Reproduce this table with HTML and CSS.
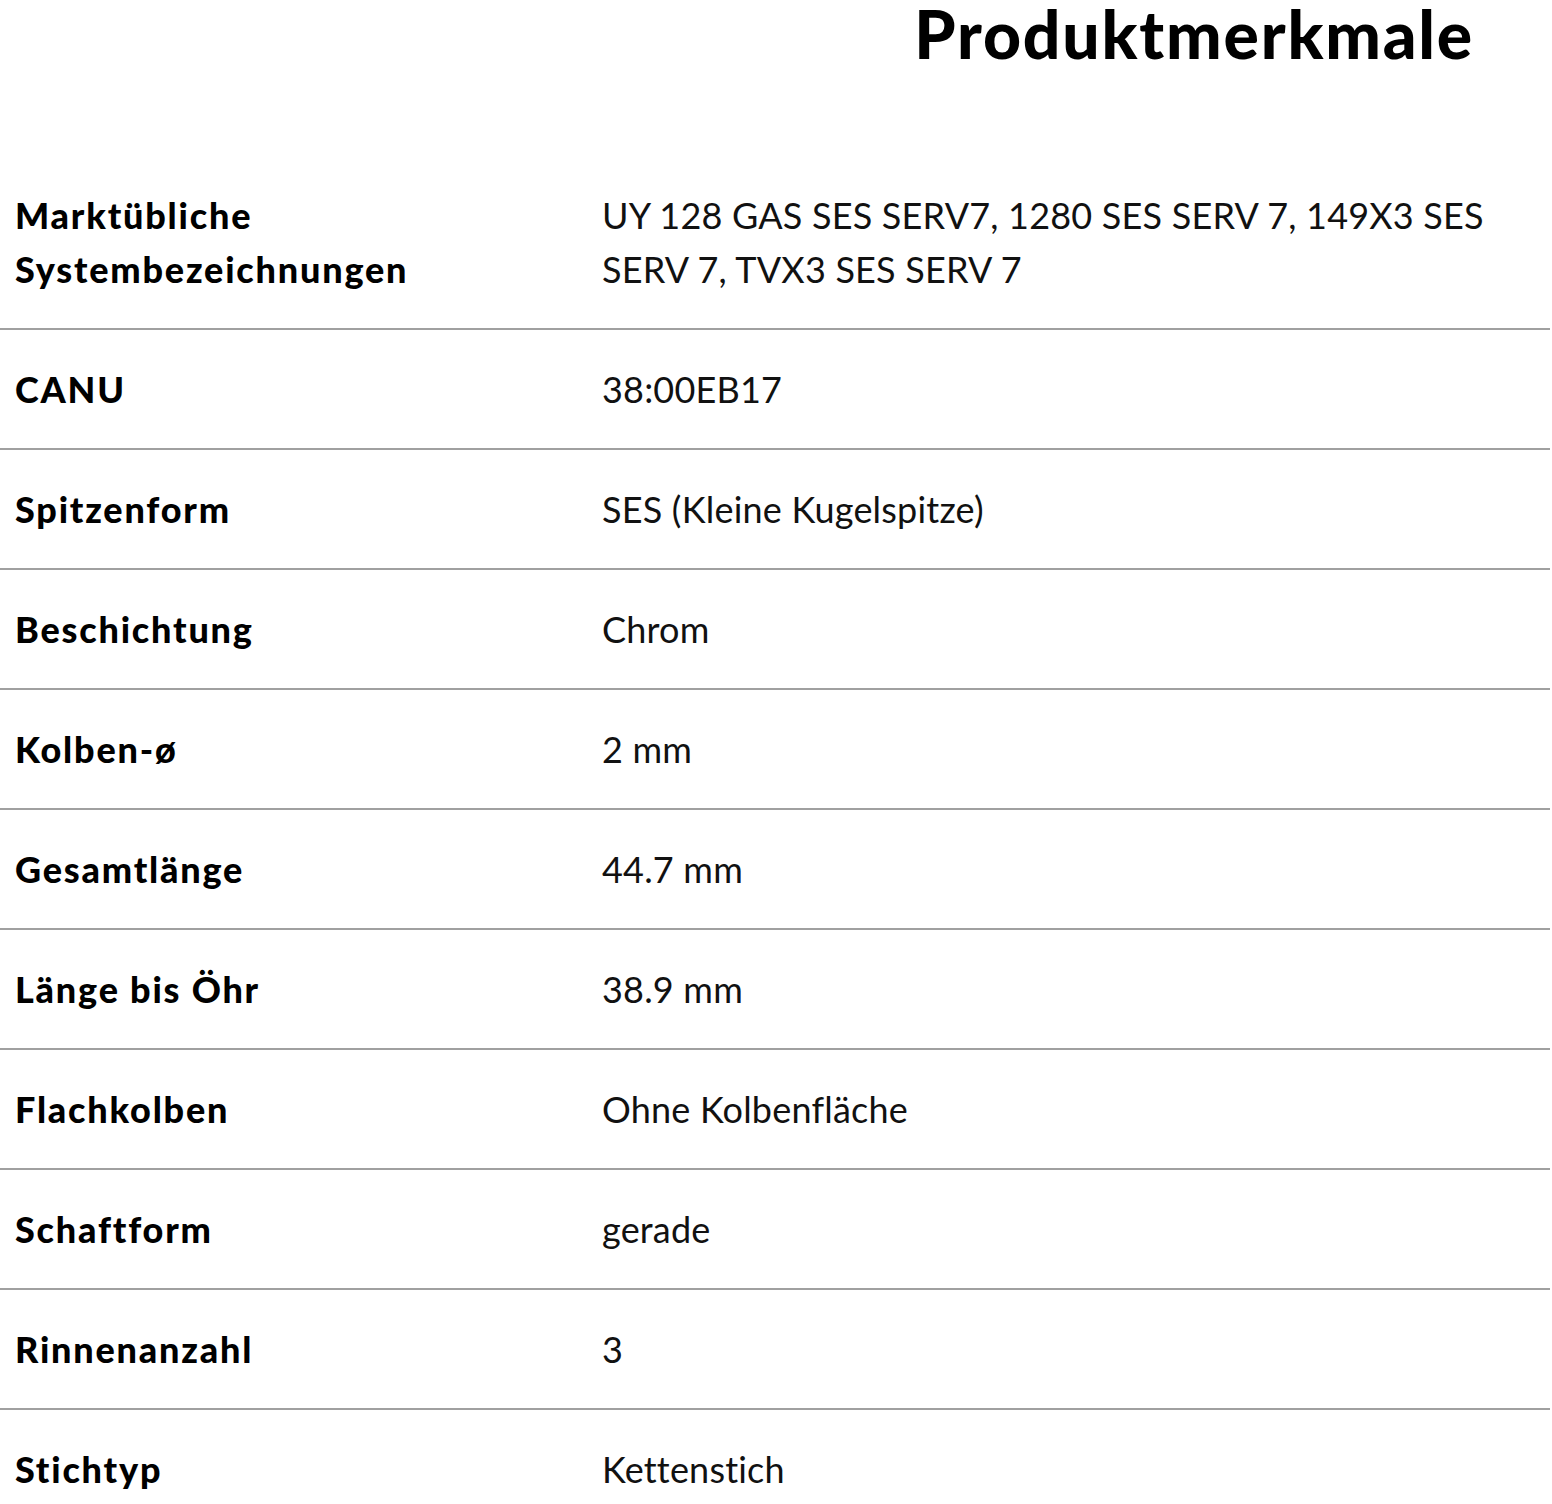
FILE: index.html
```html
<!DOCTYPE html>
<html lang="de">
<head>
<meta charset="utf-8">
<title>Produktmerkmale</title>
<link rel="stylesheet" href="styles.css">
</head>
<body>
<section class="features">
  <header class="features-head">
    <h2 class="features-title">Produktmerkmale</h2>
  </header>
  <dl class="spec-list">
    <div class="spec-row">
      <dt class="spec-label">Marktübliche Systembezeichnungen</dt>
      <dd class="spec-value">UY 128 GAS SES SERV7, 1280 SES SERV 7, 149X3 SES SERV 7, TVX3 SES SERV 7</dd>
    </div>
    <div class="spec-row">
      <dt class="spec-label">CANU</dt>
      <dd class="spec-value">38:00EB17</dd>
    </div>
    <div class="spec-row">
      <dt class="spec-label">Spitzenform</dt>
      <dd class="spec-value">SES (Kleine Kugelspitze)</dd>
    </div>
    <div class="spec-row">
      <dt class="spec-label">Beschichtung</dt>
      <dd class="spec-value">Chrom</dd>
    </div>
    <div class="spec-row">
      <dt class="spec-label">Kolben-ø</dt>
      <dd class="spec-value">2 mm</dd>
    </div>
    <div class="spec-row">
      <dt class="spec-label">Gesamtlänge</dt>
      <dd class="spec-value">44.7 mm</dd>
    </div>
    <div class="spec-row">
      <dt class="spec-label">Länge bis Öhr</dt>
      <dd class="spec-value">38.9 mm</dd>
    </div>
    <div class="spec-row">
      <dt class="spec-label">Flachkolben</dt>
      <dd class="spec-value">Ohne Kolbenfläche</dd>
    </div>
    <div class="spec-row">
      <dt class="spec-label">Schaftform</dt>
      <dd class="spec-value">gerade</dd>
    </div>
    <div class="spec-row">
      <dt class="spec-label">Rinnenanzahl</dt>
      <dd class="spec-value">3</dd>
    </div>
    <div class="spec-row">
      <dt class="spec-label">Stichtyp</dt>
      <dd class="spec-value">Kettenstich</dd>
    </div>
  </dl>
</section>
</body>
</html>
```
FILE: styles.css
```css
html, body {
  margin: 0;
  padding: 0;
  background: #ffffff;
}

body {
  font-family: Lato, "Noto Sans", "Liberation Sans", sans-serif;
  color: #000;
  width: 1552px;
  overflow: hidden;
}

.features {
  width: 1550px;
}

.features-head {
  height: 156px;
  display: flex;
  justify-content: flex-end;
  align-items: flex-start;
  padding-right: 76px;
  box-sizing: border-box;
}

.features-title {
  margin: 0;
  font-size: 66px;
  line-height: 68px;
  font-weight: 900;
  letter-spacing: 1.8px;
}

.spec-list {
  margin: 0;
  padding: 0;
}

.spec-row {
  display: grid;
  grid-template-columns: 587px 1fr;
  padding: 32px 40px 32px 15px;
  border-bottom: 2px solid #a0a0a0;
  line-height: 54px;
}

.spec-row:last-child {
  border-bottom: none;
}

.spec-label {
  margin: 0;
  padding-right: 40px;
  font-size: 36px;
  font-weight: 900;
  letter-spacing: 1.8px;
  color: #000;
}

.spec-value {
  margin: 0;
  font-size: 36px;
  font-weight: 400;
  letter-spacing: 0.2px;
  color: #111;
}
```
